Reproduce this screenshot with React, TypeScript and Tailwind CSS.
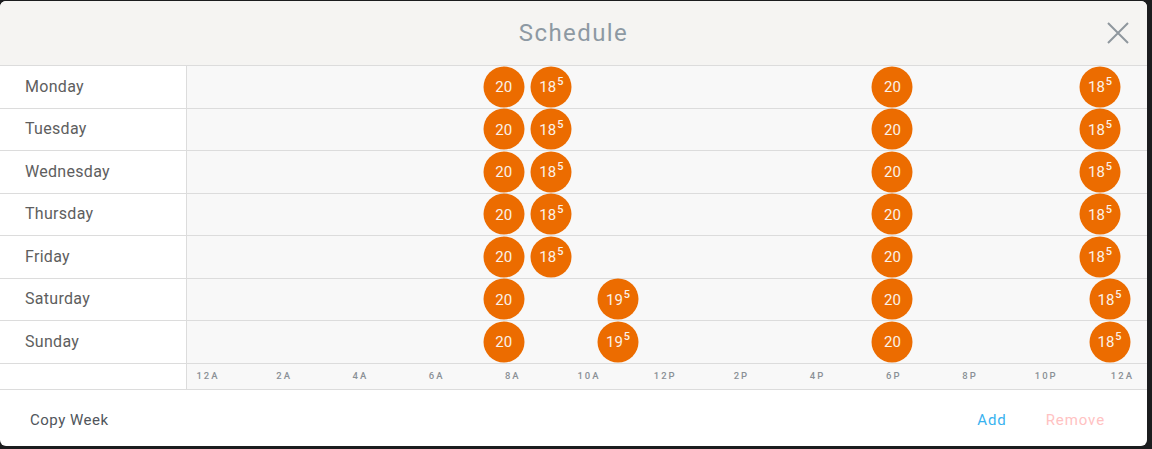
import React from "react";

type Pt = { h: number; t: string; sup?: string };

const PER_HOUR = 38.1;
const OFFSET = 21.5;

const weekday: Pt[] = [
  { h: 7.75, t: "20" },
  { h: 9, t: "18", sup: "5" },
  { h: 17.95, t: "20" },
  { h: 23.4, t: "18", sup: "5" },
];
const weekend: Pt[] = [
  { h: 7.75, t: "20" },
  { h: 10.75, t: "19", sup: "5" },
  { h: 17.95, t: "20" },
  { h: 23.65, t: "18", sup: "5" },
];

const days: { name: string; pts: Pt[] }[] = [
  { name: "Monday", pts: weekday },
  { name: "Tuesday", pts: weekday },
  { name: "Wednesday", pts: weekday },
  { name: "Thursday", pts: weekday },
  { name: "Friday", pts: weekday },
  { name: "Saturday", pts: weekend },
  { name: "Sunday", pts: weekend },
];

const axis = ["12A", "2A", "4A", "6A", "8A", "10A", "12P", "2P", "4P", "6P", "8P", "10P", "12A"];

const font = { fontFamily: "Roboto, 'Noto Sans', sans-serif" };

export default function App() {
  return (
    <div className="h-[449px] w-[1152px] bg-[#1b1c1e] pt-[1px] pr-[5px] pb-[3px]" style={font}>
      <div className="flex h-full flex-col overflow-hidden rounded-[6px] bg-white">
        <div className="relative flex h-[64px] shrink-0 items-center justify-center bg-[#f5f4f2]">
          <span className="text-[24px] tracking-[1.4px] text-[#8d99a3]">Schedule</span>
          <button className="absolute right-[18px] top-[21px] h-[22px] w-[22px]">
            <svg viewBox="0 0 22 22" width="22" height="22" fill="none" stroke="#8f979e" strokeWidth="2">
              <path d="M1 1L21 21M21 1L1 21" />
            </svg>
          </button>
        </div>
        {days.map((d) => (
          <div key={d.name} className="flex h-[42.5px] shrink-0 border-t border-[#dcdcdc]">
            <div className="flex w-[187px] shrink-0 items-center border-r border-[#dcdcdc] pl-[25px] text-[16px] tracking-[0.3px] text-[#5e5e5e]">
              {d.name}
            </div>
            <div className="relative flex-1 bg-[#f8f8f8]">
              {d.pts.map((p, i) => (
                <div
                  key={i}
                  className="absolute top-1/2 flex h-[41px] w-[41px] -translate-x-1/2 -translate-y-1/2 items-center justify-center rounded-full bg-[#ec6c00] text-[15px] text-[#fbf1e8]"
                  style={{ left: OFFSET + p.h * PER_HOUR }}
                >
                  <span className="flex items-start leading-[18px]">
                    <span>{p.t}</span>
                    {p.sup && <span className="ml-[1px] mt-[-2px] text-[11px] font-medium leading-[12px]">{p.sup}</span>}
                  </span>
                </div>
              ))}
            </div>
          </div>
        ))}
        <div className="flex h-[27px] shrink-0 border-y border-[#dcdcdc]">
          <div className="w-[187px] shrink-0 border-r border-[#dcdcdc]" />
          <div className="relative flex-1 bg-[#f8f8f8]">
            {axis.map((a, i) => (
              <span
                key={i}
                className="absolute top-1/2 -translate-x-1/2 -translate-y-1/2 pl-[2px] text-[9.5px] font-medium tracking-[2px] text-[#8a9096]"
                style={{ left: 20 + i * 2 * PER_HOUR }}
              >
                {a}
              </span>
            ))}
          </div>
        </div>
        <div className="flex flex-1 items-center pl-[30px] pr-[42px] pt-[5px] text-[15px] tracking-[0.5px]">
          <span className="text-[#50555b]">Copy Week</span>
          <span className="ml-auto tracking-[0.9px] text-[#38b2ef]">Add</span>
          <span className="ml-[39px] tracking-[0.9px] text-[#ffc2c2]">Remove</span>
        </div>
      </div>
    </div>
  );
}
